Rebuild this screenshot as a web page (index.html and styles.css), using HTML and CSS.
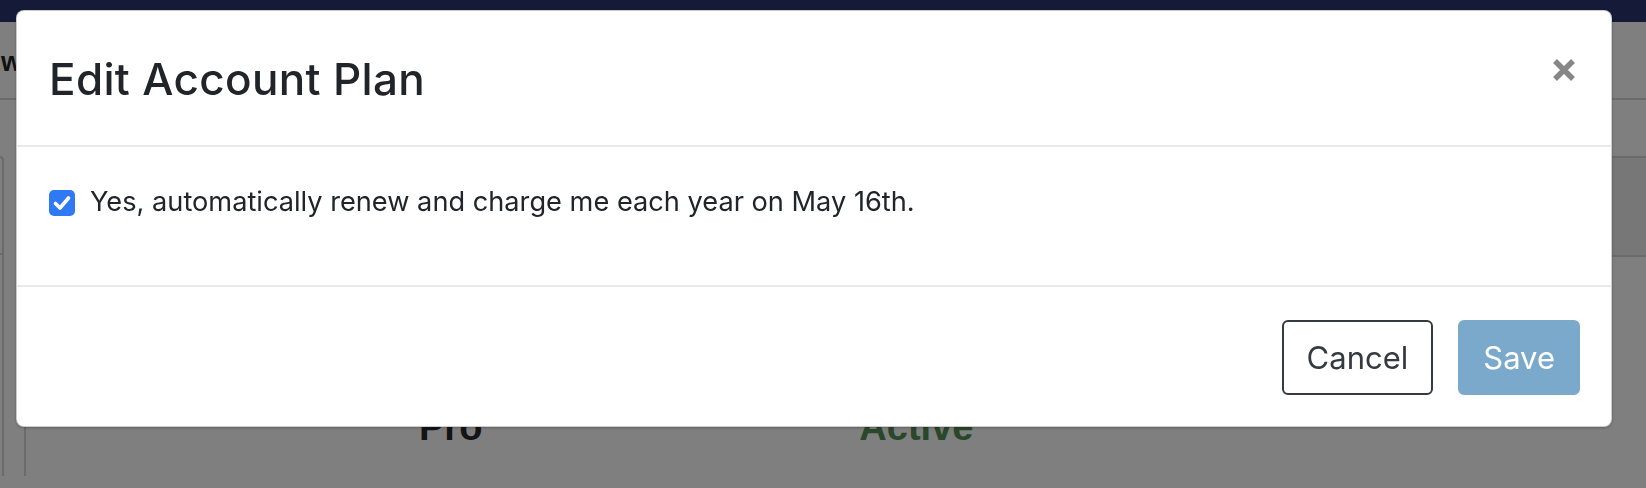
FILE: index.html
```html
<!DOCTYPE html>
<html lang="en">
<head>
<meta charset="utf-8">
<title>Edit Account Plan</title>
<link rel="stylesheet" href="styles.css">
</head>
<body>
<div class="page">
  <nav class="topnav"></nav>
  <header class="page-head">
    <div class="page-title">w</div>
  </header>
  <div class="page-body">
    <aside class="side-card">
      <div class="side-head"></div>
    </aside>
    <main class="plan-card">
      <div class="plan-head"></div>
      <div class="plan-row">
        <span class="plan-name">Pro</span>
        <span class="plan-status">Active</span>
      </div>
    </main>
  </div>
</div>

<div class="backdrop"></div>

<div class="modal" role="dialog" aria-labelledby="modal-title">
  <div class="modal-header">
    <h4 class="modal-title" id="modal-title">Edit Account Plan</h4>
    <button class="close" type="button" aria-label="Close">
      <svg width="24" height="24" viewBox="0 0 24 24" aria-hidden="true">
        <path d="M3 3 L21 21 M21 3 L3 21" stroke="#878787" stroke-width="5.4" stroke-linecap="butt" fill="none"/>
      </svg>
    </button>
  </div>
  <div class="modal-body">
    <label class="check-row">
      <span class="check-box" role="checkbox" aria-checked="true">
        <svg width="26" height="26" viewBox="0 0 26 26" aria-hidden="true">
          <path d="M6.5 13.5 L11 18 L19.5 8" stroke="#ffffff" stroke-width="3.6" stroke-linecap="round" stroke-linejoin="round" fill="none"/>
        </svg>
      </span>
      <span class="check-label">Yes, automatically renew and charge me each year on May 16th.</span>
    </label>
  </div>
  <div class="modal-footer">
    <button class="btn btn-outline" type="button">Cancel</button>
    <button class="btn btn-primary" type="button" disabled>Save</button>
  </div>
</div>
</body>
</html>
```

FILE: styles.css
```css
* {
  box-sizing: border-box;
}

html, body {
  margin: 0;
  padding: 0;
  height: 100%;
  overflow: hidden;
}

body {
  background: #ffffff;
  font-family: "Inter", "Liberation Sans", sans-serif;
  color: #212529;
}

/* ---------- page behind the dialog ---------- */
.page {
  height: 100%;
}

.topnav {
  height: 22px;
  background: #2a3470;
}

.page-head {
  height: 78px;
  border-bottom: 2px solid #d7d7d7;
  display: flex;
  align-items: center;
}

.page-title {
  padding-left: 1px;
  font-family: "Liberation Sans", sans-serif;
  font-weight: 700;
  font-size: 27px;
  color: #222222;
  margin-top: 4px;
}

.page-body {
  display: flex;
  padding-top: 56px;
  gap: 20px;
}

.side-card {
  width: 4px;
  height: 320px;
  border-top: 2px solid #d7d7d7;
  border-right: 2px solid #d7d7d7;
  border-top-right-radius: 6px;
}

.side-head {
  height: 97px;
  border-bottom: 2px solid #d7d7d7;
}

.plan-card {
  flex: 1;
  border-top: 2px solid #d7d7d7;
  border-left: 2px solid #d7d7d7;
}

.plan-head {
  height: 99px;
  background: #eeeeee;
  border-bottom: 2px solid #d7d7d7;
}

.plan-row {
  display: flex;
  padding-top: 151px;
  font-family: "Liberation Sans", sans-serif;
  font-weight: 700;
  font-size: 38px;
  line-height: 1;
}

.plan-name {
  margin-left: 393px;
  color: #282828;
}

.plan-status {
  margin-left: 377px;
  color: #528e52;
}

/* ---------- backdrop ---------- */
.backdrop {
  position: fixed;
  inset: 0;
  background: rgba(0, 0, 0, 0.5);
}

/* ---------- dialog ---------- */
.modal {
  position: fixed;
  left: 16px;
  top: 10px;
  width: 1596px;
  background: #ffffff;
  border: 1px solid rgba(0, 0, 0, 0.2);
  border-radius: 8px;
  box-shadow: 0 1px 3px rgba(0, 0, 0, 0.25);
}

.modal-header {
  display: flex;
  align-items: flex-start;
  padding: 37px 32px 34px 32px;
  border-bottom: 2px solid #e9e9ef;
}

.modal-title {
  margin: 0;
  flex: 1;
  font-size: 44px;
  font-weight: 500;
  letter-spacing: 0.35px;
  line-height: 63px;
  color: #212529;
}

.close {
  margin: 10px 3px 0 0;
  padding: 0;
  border: 0;
  background: transparent;
  width: 24px;
  height: 24px;
  display: flex;
}

.modal-body {
  padding: 34px 32px 30px 32px;
}

.check-row {
  display: flex;
  align-items: center;
  gap: 15px;
  margin-bottom: 32px;
  font-size: 27.2px;
  line-height: 42px;
}

.check-box {
  width: 26px;
  height: 26px;
  border-radius: 5px;
  background: #2f79f5;
  display: flex;
  margin-top: 2px;
}

.check-label {
  color: #212529;
}

.modal-footer {
  display: flex;
  justify-content: flex-end;
  gap: 25px;
  padding: 33px 31px 31px 32px;
  border-top: 2px solid #e9e9ef;
}

.btn {
  font-family: "Inter", "Liberation Sans", sans-serif;
  font-size: 31px;
  line-height: 1;
  height: 75px;
  padding: 0 23px;
  border-radius: 6px;
  border: 2px solid transparent;
}

.btn-outline {
  background: #ffffff;
  border-color: #343a40;
  color: #343a40;
}

.btn-primary {
  background: #7aa9cc;
  border-color: #7aa9cc;
  color: #ffffff;
}
```
